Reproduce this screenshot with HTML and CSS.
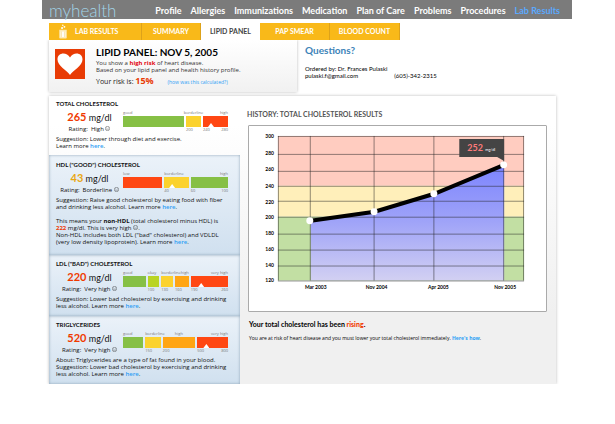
FILE: index.html
```html
<!DOCTYPE html>
<html lang="en">
<head>
    <meta charset="UTF-8">
    <meta name="viewport" content="width=device-width, initial-scale=1.0">
    <title>myhealth - Lab Results</title>
    <link rel="stylesheet" href="styles.css">
</head>
<body>
    <header class="topbar">
        <a class="logo" href="#">myhealth</a>
        <nav class="main-nav">
            <a href="#">Profile</a>
            <a href="#">Allergies</a>
            <a href="#">Immunizations</a>
            <a href="#">Medication</a>
            <a href="#">Plan of Care</a>
            <a href="#">Problems</a>
            <a href="#">Procedures</a>
            <a class="current" href="#">Lab Results</a>
        </nav>
    </header>

    <main>
        <nav class="tabs">
            <a class="tab tab-first" href="#">
                <svg class="beaker" viewBox="0 0 10 16" aria-hidden="true">
                    <path d="M1 6h8v8.500q0 1-1 1H2q-1 0-1-1z" fill="#fde9b0"/>
                    <path d="M2.500 8h5v6h-5z" fill="#fff"/>
                    <path d="M3.500 8v6M6.500 8v6" stroke="#f3cf70" stroke-width=".6"/>
                    <circle cx="4" cy="4.300" r="1.100" fill="#fff"/>
                    <circle cx="6.500" cy="3" r="1" fill="#fff"/>
                    <circle cx="4.800" cy="1.300" r=".8" fill="#fff"/>
                </svg>
                LAB RESULTS
            </a>
            <a class="tab" href="#">SUMMARY</a>
            <a class="tab active" href="#">LIPID PANEL</a>
            <a class="tab tab-wide" href="#">PAP SMEAR</a>
            <a class="tab tab-wide" href="#">BLOOD COUNT</a>
        </nav>

        <div class="intro">
            <section class="risk-card">
                <svg class="heart" viewBox="0 0 30 30" aria-hidden="true">
                    <rect width="30" height="30" fill="#e83b05"/>
                    <path d="M15 26C12 21.500 2.500 17 2.500 10.500C2.500 3.500 11.500 2.500 15 8.500C18.500 2.500 27.500 3.500 27.500 10.500C27.500 17 18 21.500 15 26z" fill="#fff"/>
                </svg>
                <div>
                    <h1>LIPID PANEL: NOV 5, 2005</h1>
                    <p>You show a <strong class="red">high risk</strong> of heart disease.<br>Based on your lipid panel and health history profile.</p>
                    <p class="risk">Your risk is: <strong>15%</strong> <a href="#">(how was this calculated?)</a></p>
                </div>
            </section>
            <section class="questions">
                <h2>Questions?</h2>
                <p>Ordered by: Dr. Frances Pulaski</p>
                <p class="contact"><span>pulaski.f@gmail.com</span><span>(605)-342-2315</span></p>
            </section>
        </div>

        <div class="panel">
            <div class="results">
                <section class="result plain">
                    <h3>TOTAL CHOLESTEROL</h3>
                    <div class="reading">
                        <div class="score">
                            <div><strong>265</strong> mg/dl</div>
                            <small>Rating:&nbsp; High <svg class="face" viewBox="0 0 10 10"><use href="#sad"/></svg></small>
                        </div>
                        <div class="gauge gauge-total">
                            <span class="label">good</span><span class="label mid">borderline</span><span class="label end">high</span>
                            <i class="green"></i><i class="yellow"></i><i class="orange-red"><b class="marker"></b></i>
                            <span></span><span class="tick">200</span><span class="tick pair"><span>240</span><span>280</span></span>
                        </div>
                    </div>
                    <p>Suggestion: Lower through diet and exercise.<br>Learn more <a href="#">here</a>.</p>
                </section>

                <section class="result tall">
                    <h3>HDL ("GOOD") CHOLESTEROL</h3>
                    <div class="reading">
                        <div class="score">
                            <div><strong class="amber">43</strong> mg/dl</div>
                            <small>Rating:&nbsp; Borderline <svg class="face" viewBox="0 0 10 10"><use href="#sad"/></svg></small>
                        </div>
                        <div class="gauge gauge-hdl">
                            <span class="label">low</span><span class="label">borderline</span><span class="label end">high</span>
                            <i class="orange-red"></i><i class="yellow"><b class="marker"></b></i><i class="green"></i>
                            <span></span><span class="tick">40</span><span class="tick pair"><span>60</span><span>100</span></span>
                        </div>
                    </div>
                    <p>Suggestion: Raise good cholesterol by eating food with fiber<br>and drinking less alcohol. Learn more <a href="#">here</a>.</p>
                    <p class="note">This means your <strong>non-HDL</strong> (total cholesterol minus HDL) is<br><strong class="rust">222</strong> mg/dl. This is very high <svg class="face" viewBox="0 0 10 10"><use href="#sad"/></svg>.<br>Non-HDL includes both LDL ("bad" cholesterol) and VDLDL<br>(very low density lipoprotein). Learn more <a href="#">here</a>.</p>
                </section>

                <section class="result">
                    <h3>LDL ("BAD") CHOLESTEROL</h3>
                    <div class="reading">
                        <div class="score">
                            <div><strong>220</strong> mg/dl</div>
                            <small>Rating:&nbsp; Very high <svg class="face" viewBox="0 0 10 10"><use href="#sad"/></svg></small>
                        </div>
                        <div class="gauge gauge-ldl">
                            <span class="label">good</span><span class="label">okay</span><span class="label">borderline</span><span class="label end">high</span><span class="label end">very high</span>
                            <i class="green"></i><i class="lime"></i><i class="yellow"></i><i class="orange"></i><i class="orange-red"><b class="marker"></b></i>
                            <span></span><span class="tick">100</span><span class="tick">130</span><span class="tick">160</span><span class="tick pair"><span>190</span><span>260</span></span>
                        </div>
                    </div>
                    <p>Suggestion: Lower bad cholesterol by exercising and drinking<br>less alcohol. Learn more <a href="#">here</a>.</p>
                </section>

                <section class="result">
                    <h3>TRIGLYCERIDES</h3>
                    <div class="reading">
                        <div class="score">
                            <div><strong>520</strong> mg/dl</div>
                            <small>Rating:&nbsp; Very high <svg class="face" viewBox="0 0 10 10"><use href="#sad"/></svg></small>
                        </div>
                        <div class="gauge gauge-tri">
                            <span class="label">good</span><span class="label">borderline</span><span class="label mid">high</span><span class="label end">very high</span>
                            <i class="green"></i><i class="yellow"></i><i class="orange"></i><i class="orange-red"><b class="marker"></b></i>
                            <span></span><span class="tick">150</span><span class="tick">200</span><span class="tick pair"><span>500</span><span>800</span></span>
                        </div>
                    </div>
                    <p>About: Triglycerides are a type of fat found in your blood.<br>Suggestion: Lower bad cholesterol by exercising and drinking<br>less alcohol. Learn more <a href="#">here</a>.</p>
                </section>
            </div>

            <section class="history">
                <h2>HISTORY: TOTAL CHOLESTEROL RESULTS</h2>
                <div class="chart">
                    <svg viewBox="0 0 298 186" role="img" aria-label="Total cholesterol from March 2003 to November 2005">
                        <defs>
                            <linearGradient id="area" x1="0" y1="0" x2="0" y2="1">
                                <stop offset="0" stop-color="#7c84ff"/>
                                <stop offset=".5" stop-color="#a0a4f8"/>
                                <stop offset="1" stop-color="#d2d0f2"/>
                            </linearGradient>
                            <symbol id="sad" viewBox="0 0 10 10">
                                <circle cx="5" cy="5" r="4.300" fill="none" stroke="#333" stroke-width=".9"/>
                                <circle cx="3.400" cy="4" r=".7" fill="#333"/>
                                <circle cx="6.600" cy="4" r=".7" fill="#333"/>
                                <path d="M3 7.300Q5 5.300 7 7.300" fill="none" stroke="#333" stroke-width=".8"/>
                            </symbol>
                        </defs>
                        <!-- risk zones -->
                        <rect x="29" y="10" width="247" height="50" fill="#ffccc0"/>
                        <rect x="29" y="60" width="247" height="31" fill="#ffefba"/>
                        <rect x="29" y="91" width="247" height="64" fill="#c2dfa3"/>
                        <path d="M62 95L126 86L186 68L256 39V155H62z" fill="url(#area)"/>
                        <!-- grid -->
                        <path class="grid" d="M29 10.500H276M29 28.500H276M29 45.500H276M29 60.500H276M29 75.500H276M29 91.500H276M29 108.500H276M29 124.500H276M29 140.500H276M29 155.500H276M29.500 10V155M61.500 10V155M125.500 10V155M185.500 10V155M255.500 10V155M275.500 10V155"/>
                        <path class="line" d="M62 95L126 86L186 68L256 39"/>
                        <g fill="#fff">
                            <circle cx="61" cy="95" r="3.500"/>
                            <circle cx="125.500" cy="86" r="3.500"/>
                            <circle cx="185.500" cy="68" r="3.500"/>
                            <circle cx="255.500" cy="39" r="3.500"/>
                        </g>
                        <path d="M211 13H256V35L249 31H211z" fill="#444"/>
                        <text class="tip-value" x="219" y="25">252</text>
                        <text class="tip-unit" x="237" y="25">mg/dl</text>
                        <g class="y-axis">
                            <text x="25" y="12">300</text>
                            <text x="25" y="29">280</text>
                            <text x="25" y="45">260</text>
                            <text x="25" y="62">240</text>
                            <text x="25" y="78">220</text>
                            <text x="25" y="93">200</text>
                            <text x="25" y="109">180</text>
                            <text x="25" y="125">160</text>
                            <text x="25" y="141">140</text>
                            <text x="25" y="157">120</text>
                        </g>
                        <g class="x-axis">
                            <text x="67" y="164">Mar 2003</text>
                            <text x="128" y="164">Nov 2004</text>
                            <text x="190" y="164">Apr 2005</text>
                            <text x="257" y="164">Nov 2005</text>
                        </g>
                    </svg>
                </div>
                <p class="summary">Your total cholesterol has been <strong>rising</strong>.</p>
                <p class="advice">You are at risk of heart disease and you must lower your total cholesterol immediately. <a href="#">Here's how</a>.</p>
            </section>
        </div>
    </main>
</body>
</html>
```
FILE: styles.css
```css
* {
    box-sizing: border-box;
    margin: 0;
    padding: 0;
}

body {
    background: #fff;
    color: #111;
    font-family: "Open Sans", sans-serif;
    font-size: 6px;
    line-height: 7px;
    padding: 0 43px 0 42px;
}

h1, h2, h3, .topbar, .tabs, .questions, .score, .chart, .summary {
    font-family: Lato, sans-serif;
}

a {
    color: #2f9ff5;
    text-decoration: none;
}

/* header */
.topbar {
    display: flex;
    align-items: center;
    justify-content: space-between;
    height: 19px;
    padding: 3px 12px 0 7px;
    background: #7b7b7b;
}

.logo {
    color: #a3d5e8;
    font-size: 17px;
    font-weight: 300;
    line-height: 16px;
}

.main-nav {
    display: flex;
    gap: 9px;
    font-size: 9px;
    font-weight: bold;
    line-height: 10px;
}

.main-nav a {
    color: #fff;
}

.main-nav .current {
    color: #5aa9ff;
}

main {
    padding: 4px 16px 0 7px;
}

/* tabs */
.tabs {
    display: flex;
    height: 17px;
}

.tab {
    display: flex;
    align-items: center;
    justify-content: center;
    flex: 0 0 59px;
    background: #f9b919;
    border-right: 1px solid #dda21a;
    color: #fff;
    font-size: 7px;
    font-weight: bold;
}

.tab-first {
    flex-basis: 93px;
    justify-content: flex-start;
    gap: 7px;
    padding-left: 9px;
}

.tab-wide {
    flex-basis: 70px;
}

.tab.active {
    background: #fff;
    border: 0;
    color: #444;
}

.beaker {
    width: 10px;
    height: 15px;
}

/* intro */
.intro {
    display: flex;
    gap: 8px;
}

.risk-card {
    display: flex;
    flex: 0 1 248px;
    gap: 11px;
    height: 52px;
    padding: 7px 0 0 6px;
    background: linear-gradient(#fff, #f1f1f1);
    box-shadow: 0 0 3px #bbb;
    color: #333;
    clip-path: inset(0 -4px -4px -4px);
}

.heart {
    flex: none;
    width: 30px;
    height: 30px;
    margin-top: 2px;
}

h1 {
    margin-bottom: 3px;
    color: #000;
    font-size: 10px;
    line-height: 10px;
}

.risk-card p {
    white-space: nowrap;
}

.risk-card .risk {
    margin-top: 2px;
    color: #222;
    font-size: 7px;
    line-height: 10px;
}

.risk strong {
    color: #e83b05;
    font-size: 9px;
}

.risk a {
    margin-left: 12px;
    font-size: 5px;
}

.red {
    color: #e30613;
}

.questions {
    padding-top: 5px;
    color: #000;
}

.questions h2 {
    margin-bottom: 10px;
    color: #3d83b8;
    font-size: 10px;
    line-height: 10px;
}

.contact {
    display: flex;
    gap: 36px;
}

/* main panel */
.panel {
    display: flex;
    margin-top: 4px;
    background: linear-gradient(#fff 10%, #f0f0f0 75%);
    box-shadow: 0 0 3px #bbb;
}

.results {
    flex: 0 0 191px;
}

.result {
    padding: 5px 0 6px 7px;
    background: linear-gradient(#ebf2f9, #d0e0ef);
    box-shadow: inset 0 0 3px #8fa5b8;
    white-space: nowrap;
}

.result.plain {
    padding-top: 4px;
    padding-bottom: 5px;
    background: none;
    box-shadow: none;
}

.result.tall {
    padding-top: 6px;
    padding-bottom: 9px;
}

.result a {
    font-weight: 600;
}

h3 {
    font-size: 6px;
    line-height: 8px;
}

.reading {
    display: flex;
    height: 28px;
}

.score {
    flex: 0 0 67px;
    padding-top: 2px;
    font-size: 9px;
    line-height: 14px;
    text-align: center;
}

.score strong {
    color: #f03a00;
    font-size: 11px;
}

.score .amber {
    color: #e9a713;
}

.score small {
    display: block;
    font-family: "Open Sans", sans-serif;
    font-size: 6px;
    line-height: 8px;
}

.face {
    width: 5px;
    height: 5px;
}

.rust {
    color: #f03a00;
}

.note {
    margin-top: 7px;
}

/* gauges */
.gauge {
    display: grid;
    flex: 1;
    grid-template-rows: 4px 11px 4px;
    align-content: start;
    gap: 1px 2px;
    padding: 3px 12px 0 0;
    color: #777;
    font-size: 4px;
    line-height: 4px;
}

.gauge-total {
    grid-template-columns: 61fr 15fr 25fr;
}

.gauge-hdl {
    grid-template-columns: 40fr 25fr 38fr;
}

.gauge-ldl {
    grid-template-columns: 23fr 12fr 12fr 14fr 38fr;
}

.gauge-tri {
    grid-template-columns: 21fr 16fr 34fr 32fr;
}

.gauge > * {
    min-width: 0;
}

.label.mid {
    display: flex;
    justify-content: center;
}

.label.end {
    text-align: right;
}

.pair {
    display: flex;
    justify-content: space-between;
}

.gauge i {
    display: flex;
    align-items: flex-end;
}

.marker {
    width: 6px;
    height: 4px;
    margin-left: 20%;
    background: #fff;
    clip-path: polygon(50% 0, 100% 100%, 0 100%);
}

.green {
    background: #86c045;
}

.lime {
    background: #b9d424;
}

.yellow {
    background: #fbd22e;
}

.orange {
    background: #ffa514;
}

.orange-red {
    background: #ff4713;
}

/* history */
.history {
    flex: 1;
    padding: 14px 9px 0 7px;
}

.history h2 {
    margin-bottom: 7px;
    color: #555;
    font-size: 7px;
    line-height: 8px;
}

.chart {
    margin-left: 1px;
    background: #fff;
    border: 1px solid #aaa;
    border-radius: 1px;
}

.chart svg {
    display: block;
    width: 100%;
}

.grid {
    fill: none;
    stroke: #222;
    stroke-opacity: .5;
}

.line {
    fill: none;
    stroke: #000;
    stroke-width: 4;
}

.y-axis,
.x-axis {
    fill: #000;
    font-size: 5px;
    font-weight: bold;
    text-anchor: end;
}

.x-axis {
    text-anchor: middle;
}

.tip-value {
    fill: #ff7b7b;
    font-size: 9px;
    font-weight: bold;
}

.tip-unit {
    fill: #fff;
    font-size: 4px;
}

.summary {
    margin: 8px 0 7px 2px;
    color: #000;
    font-size: 7px;
    font-weight: bold;
    line-height: 8px;
}

.summary strong {
    color: #f03a00;
}

.advice {
    margin-left: 2px;
    color: #000;
    font-size: 5px;
}

.advice a {
    font-weight: bold;
}
```
